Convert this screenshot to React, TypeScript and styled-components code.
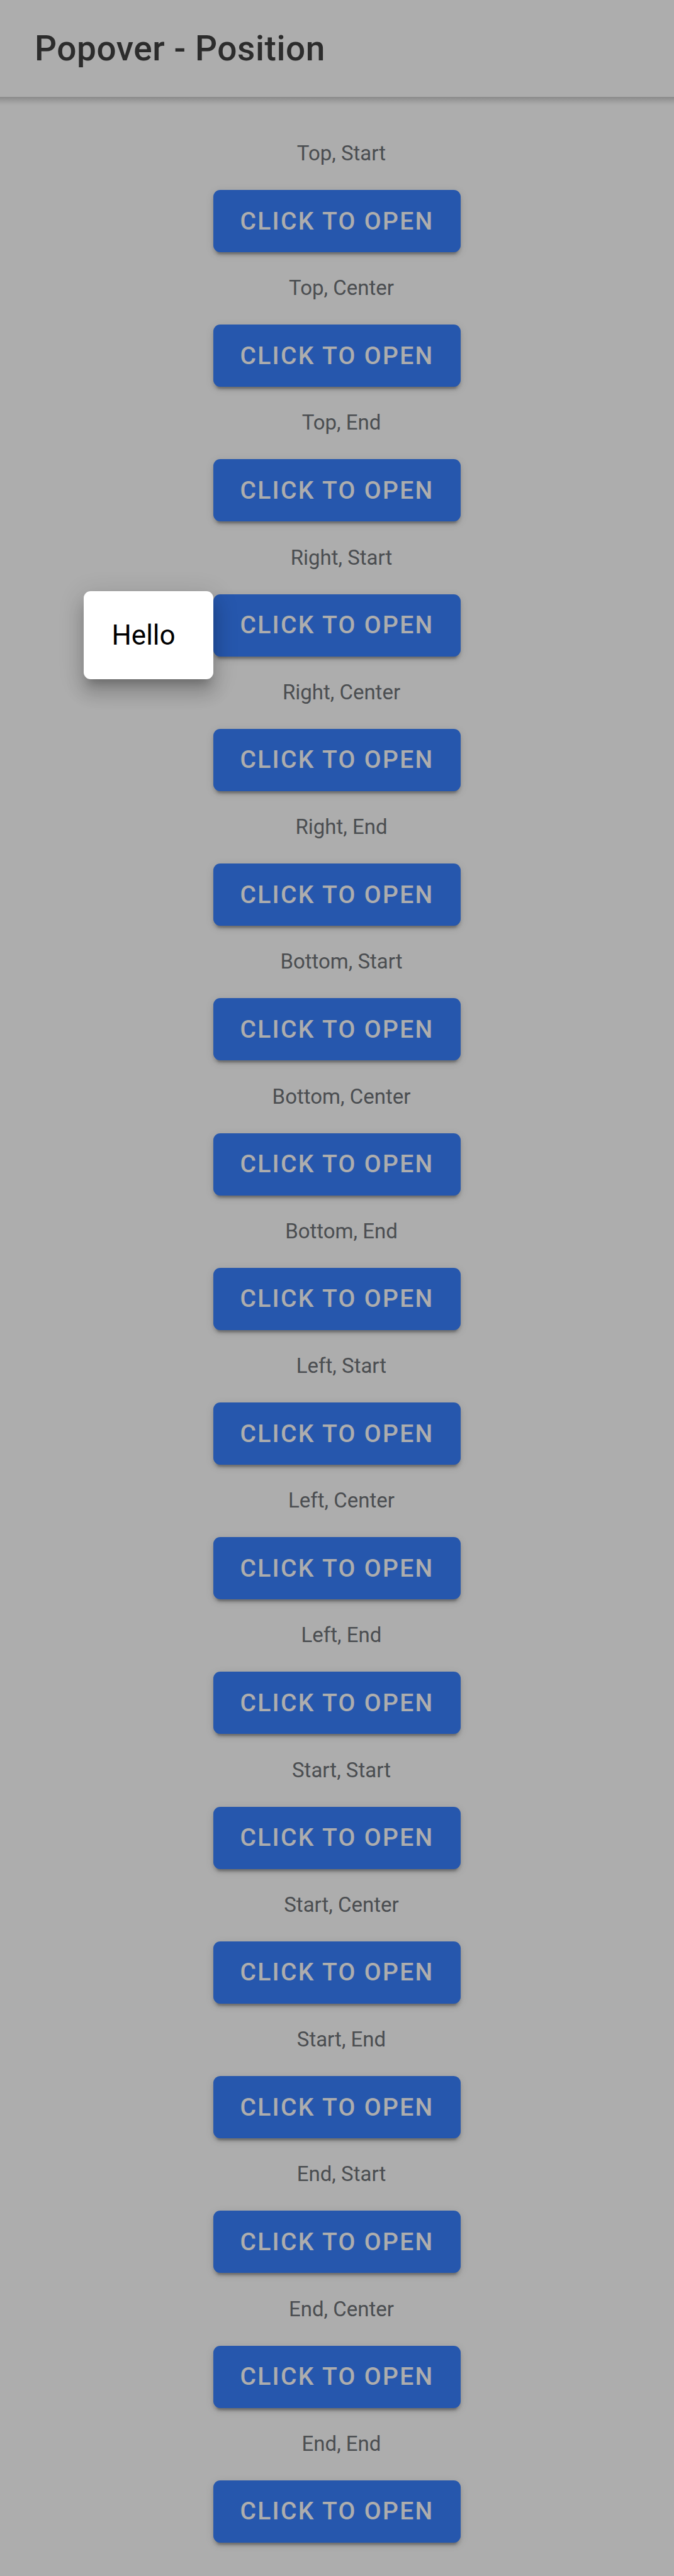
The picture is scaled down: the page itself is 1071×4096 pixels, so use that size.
import { useState } from "react";
import styled, { createGlobalStyle } from "styled-components";

const positions = [
  "Top, Start",
  "Top, Center",
  "Top, End",
  "Right, Start",
  "Right, Center",
  "Right, End",
  "Bottom, Start",
  "Bottom, Center",
  "Bottom, End",
  "Left, Start",
  "Left, Center",
  "Left, End",
  "Start, Start",
  "Start, Center",
  "Start, End",
  "End, Start",
  "End, Center",
  "End, End",
];

const GlobalStyle = createGlobalStyle`
  *, *::before, *::after { box-sizing: border-box; }
  body {
    margin: 0;
    background: #fff;
    font-family: Roboto, "Liberation Sans", sans-serif;
    -webkit-font-smoothing: antialiased;
  }
`;

const Page = styled.div`
  position: relative;
  display: flex;
  flex-direction: column;
  min-height: 100vh;
`;

const Header = styled.header`
  display: flex;
  align-items: center;
  height: 154px;
  padding: 0 55px;
`;

const HeaderShadow = styled.div`
  height: 14px;
  margin-bottom: -14px;
  background: linear-gradient(
    rgba(0, 0, 0, 0.2),
    rgba(0, 0, 0, 0.12) 35%,
    rgba(0, 0, 0, 0.03) 75%,
    rgba(0, 0, 0, 0)
  );
`;

const Title = styled.h1`
  margin: 0;
  color: #424242;
  font-size: 55px;
  font-weight: 500;
  line-height: 64px;
  letter-spacing: 0.01em;
`;

const Grid = styled.main`
  flex: 1;
  display: grid;
  grid-auto-rows: 1fr;
  justify-items: center;
  padding: 68px 14px 18px;
`;

const Cell = styled.section`
  display: flex;
  flex-direction: column;
  align-items: center;
`;

const Label = styled.h2`
  margin: 0 0 36px 14px;
  color: #6f7378;
  font-size: 33px;
  font-weight: 400;
  line-height: 44px;
`;

const Anchor = styled.div`
  position: relative;
`;

const OpenButton = styled.button`
  display: block;
  height: 99px;
  padding: 0 42px;
  border: 0;
  border-radius: 11px;
  background: #3880ff;
  color: #fff;
  font: 500 39px/44px Roboto, "Liberation Sans", sans-serif;
  letter-spacing: 0.06em;
  text-transform: uppercase;
  cursor: pointer;
  box-shadow:
    0 8px 3px -5px rgba(0, 0, 0, 0.2),
    0 5px 5px 0 rgba(0, 0, 0, 0.14),
    0 3px 14px 0 rgba(0, 0, 0, 0.12);
`;

const Backdrop = styled.div`
  position: absolute;
  inset: 0;
  z-index: 1;
  background: rgba(0, 0, 0, 0.32);
`;

const Popover = styled.div`
  position: absolute;
  top: -5px;
  right: 100%;
  z-index: 2;
  width: 206px;
  padding: 44px;
  border-radius: 11px;
  background: #fff;
  color: #000;
  font-size: 44px;
  line-height: 52px;
  box-shadow:
    0 14px 14px -8px rgba(0, 0, 0, 0.2),
    0 22px 27px 3px rgba(0, 0, 0, 0.14),
    0 8px 38px 5px rgba(0, 0, 0, 0.12);
`;

export default function App() {
  const [openPosition, setOpenPosition] = useState<string | null>("Right, Start");

  return (
    <Page>
      <GlobalStyle />
      <Header>
        <Title>Popover - Position</Title>
      </Header>
      <HeaderShadow />
      <Grid>
        {positions.map((position) => (
          <Cell key={position}>
            <Label>{position}</Label>
            <Anchor>
              <OpenButton type="button" onClick={() => setOpenPosition(position)}>
                Click to Open
              </OpenButton>
              {openPosition === position && <Popover role="dialog">Hello</Popover>}
            </Anchor>
          </Cell>
        ))}
      </Grid>
      {openPosition && <Backdrop onClick={() => setOpenPosition(null)} />}
    </Page>
  );
}
